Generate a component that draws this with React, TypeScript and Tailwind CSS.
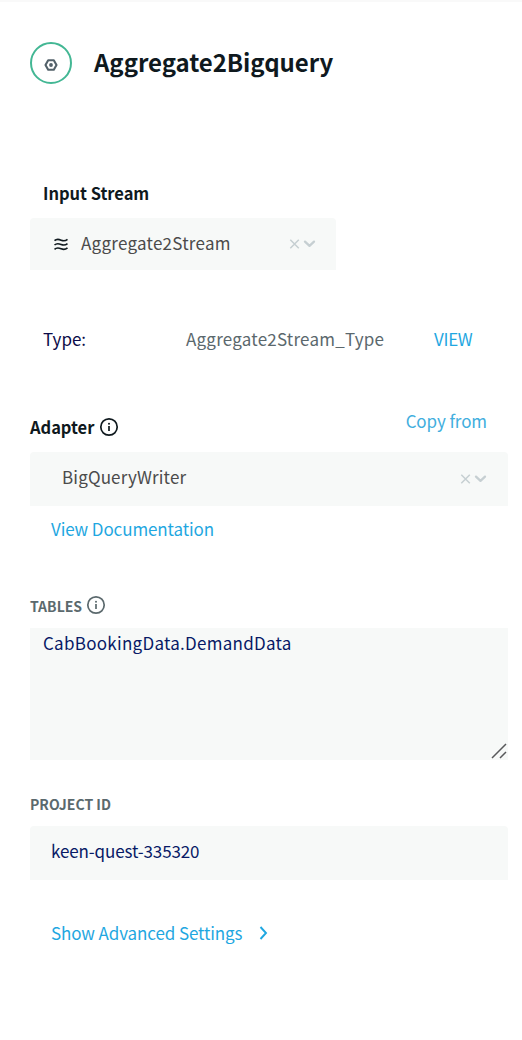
import React from "react";

const InfoIcon = () => (
  <svg width="20" height="20" viewBox="0 0 20 20" fill="none" stroke="currentColor" strokeWidth="1.7">
    <circle cx="10" cy="10" r="8.2" />
    <path d="M10 9v5" />
    <circle cx="10" cy="6.7" r="1" fill="currentColor" stroke="none" />
  </svg>
);

const SelectControls = () => (
  <svg className="ml-auto shrink-0 text-[#c6cfd2]" width="28" height="12" viewBox="0 0 28 12" fill="none" stroke="currentColor">
    <path d="M1.3 1.8l8.5 8.5M9.8 1.8l-8.5 8.5" strokeWidth="1.5" />
    <path d="M16 3.6l4.5 4.2L25 3.6" strokeWidth="2.3" strokeLinecap="round" strokeLinejoin="round" />
  </svg>
);

const StreamIcon = () => (
  <svg width="16" height="14" viewBox="0 0 16 14" fill="none" stroke="#111b20" strokeWidth="1.6">
    <path d="M1.5 3.7C4 1.4 5.8 2.2 8.2 3.2s4 1 6.3-.9" />
    <path d="M1.5 8C4 5.7 5.8 6.5 8.2 7.5s4 1 6.3-.9" />
    <path d="M1.5 12.3c2.5-2.3 4.3-1.5 6.7-.5s4 1 6.3-.9" />
  </svg>
);

export default function App() {
  return (
    <main className="flex h-[1040px] w-[522px] flex-col overflow-hidden bg-white font-['Noto_Sans_CJK_SC',sans-serif] text-[17px] leading-[22px] text-[#0f191e]">
      <div className="h-0.5 shrink-0 bg-[#f9f9f9]" />
      <header className="mt-10 flex h-[42px] items-center pl-[30px]">
        <span className="flex size-[42px] items-center justify-center rounded-full border-2 border-[#43b794] pt-1">
          <svg width="14" height="12" viewBox="0 0 14 12" fill="none">
            <path d="M4.2 1.2h5.6L12.5 6 9.8 10.8H4.2L1.5 6z" stroke="#53616a" strokeWidth="2.1" strokeLinejoin="round" />
            <circle cx="7" cy="6" r="1.9" fill="#53616a" />
          </svg>
        </span>
        <h1 className="ml-[22px] pb-0.5 text-[24px] font-bold leading-[40px] tracking-[-0.04px]">Aggregate2Bigquery</h1>
      </header>

      <section className="mt-[98px] flex h-[88px] flex-col">
        <h2 className="h-6 pl-[43px] text-[16.5px] font-bold tracking-[-0.03px]">Input Stream</h2>
        <div className="ml-[30px] mt-3 flex h-[52px] w-[306px] items-center rounded-t bg-[#f7f9f8] pl-[23px] pr-[19px] text-[#4b4b4b]">
          <StreamIcon />
          <span className="ml-3 pb-0.5 tracking-[0.25px]">Aggregate2Stream</span>
          <SelectControls />
        </div>
      </section>

      <div className="mt-[58px] flex h-6 pl-[43px]">
        <span className="w-[143px] text-[#0b0b48]">Type:</span>
        <span className="w-[248px] tracking-[0.22px] text-[#5b686d]">Aggregate2Stream_Type</span>
        <a className="tracking-[-0.3px] text-[#1fa7e1]">VIEW</a>
      </div>

      <section className="mx-[14px] mt-[58px] pl-4">
        <div className="flex h-[42px]">
          <h2 className="mt-1.5 h-6 text-[16.5px] font-bold tracking-[-0.03px]">Adapter</h2>
          <span className="ml-[5px] mt-[7px]"><InfoIcon /></span>
          <a className="ml-auto mr-[21px] tracking-[-0.1px] text-[#41aede]">Copy from</a>
        </div>
        <div className="flex h-[54px] items-center rounded-t bg-[#f7f9f8] pl-8 pr-5 text-[#4b4b4b]">
          <span className="pb-1 tracking-[0.15px]">BigQueryWriter</span>
          <SelectControls />
        </div>
        <a className="ml-[21px] mt-3 block h-6 tracking-[-0.11px] text-[#1fa7e1]">View Documentation</a>
      </section>

      <section className="mx-[14px] mt-[53px] pl-4">
        <div className="flex h-[33px] text-[#5b696d]">
          <h3 className="text-[14px] font-bold leading-[22px]">TABLES</h3>
          <span className="ml-1"><InfoIcon /></span>
        </div>
        <div className="relative h-[132px] bg-[#f7f9f8] pl-[13px] pt-1 tracking-[0.27px] text-[#081a66]">
          CabBookingData.DemandData
          <svg className="absolute bottom-0 right-0" width="18" height="18" viewBox="0 0 18 18" stroke="#58595b" strokeWidth="1.5">
            <path d="M2 16L16 2M10 16l6-6" />
          </svg>
        </div>
        <h3 className="mt-[33px] h-[33px] text-[14px] font-bold leading-[22px] text-[#5b696d]">PROJECT ID</h3>
        <div className="flex h-[54px] items-center rounded-t bg-[#f7f9f8] pb-1 pl-[21px] tracking-[-0.12px] text-[#081a66]">keen-quest-335320</div>
        <a className="ml-[21px] mt-[41px] flex h-6 items-center tracking-[-0.11px] text-[#1fa7e1]">
          Show Advanced Settings
          <svg className="ml-[15px]" width="12" height="16" viewBox="0 0 12 16" fill="none" stroke="currentColor" strokeWidth="1.9">
            <path d="M3.5 2L9 8l-5.5 6" />
          </svg>
        </a>
      </section>
    </main>
  );
}
